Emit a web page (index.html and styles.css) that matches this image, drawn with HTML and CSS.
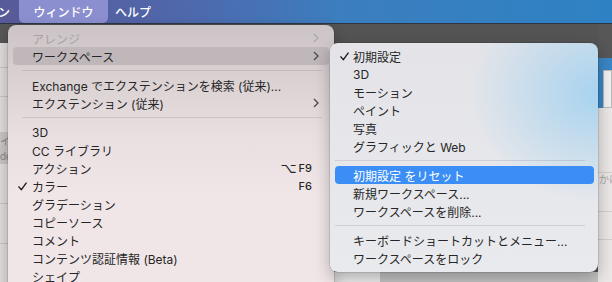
FILE: index.html
```html
<!DOCTYPE html>
<html lang="ja">
<head>
    <meta charset="UTF-8">
    <meta name="viewport" content="width=device-width, initial-scale=1.0">
    <title>ウィンドウ メニュー</title>
    <link rel="stylesheet" href="styles.css">
</head>
<body>

<div class="screen">
    <!-- メニューバー -->
    <div class="menubar">
        <span class="mb-item cut">ン</span>
        <span class="mb-item active">ウィンドウ</span>
        <span class="mb-item">ヘルプ</span>
    </div>

    <!-- 背景のアプリ画面 -->
    <div class="desk">
        <div class="side-left">
            <div class="dark" style="height:19px"></div>
            <div class="row" style="height:25px"></div>
            <div class="row" style="height:29px"></div>
            <div class="row" style="height:36px"></div>
            <div class="row grey" style="height:17px">イ</div>
            <div class="row grey" style="height:14px">do</div>
            <div class="row" style="height:40px"></div>
            <div class="row" style="height:40px"></div>
        </div>
        <div class="mid">
            <div class="mid-bottom"></div>
        </div>
        <div class="side-right">
            <div class="dark" style="height:34px"></div>
            <div class="blue"><div class="thumb"></div></div>
            <div class="panel">
                <div class="prow" style="height:65px"></div>
                <div class="prow hint" style="height:12px">かに</div>
                <div class="prow" style="height:27px"></div>
                <div class="prow" style="height:28px"></div>
            </div>
        </div>
    </div>

    <!-- ウィンドウ メニュー -->
    <div class="menu main-menu">
        <div class="item disabled">
            <span class="check"></span><span class="label">アレンジ</span>
            <svg class="arrow" viewBox="0 0 6 10" width="6" height="10"><path d="M1 1l4 4-4 4" /></svg>
        </div>
        <div class="item hover">
            <span class="check"></span><span class="label">ワークスペース</span>
            <svg class="arrow" viewBox="0 0 6 10" width="6" height="10"><path d="M1 1l4 4-4 4" /></svg>
        </div>
        <div class="sep"></div>
        <div class="item">
            <span class="check"></span><span class="label">Exchange でエクステンションを検索 (従来)...</span>
        </div>
        <div class="item">
            <span class="check"></span><span class="label">エクステンション (従来)</span>
            <svg class="arrow" viewBox="0 0 6 10" width="6" height="10"><path d="M1 1l4 4-4 4" /></svg>
        </div>
        <div class="sep"></div>
        <div class="item"><span class="check"></span><span class="label">3D</span></div>
        <div class="item"><span class="check"></span><span class="label">CC ライブラリ</span></div>
        <div class="item">
            <span class="check"></span><span class="label">アクション</span>
            <span class="shortcut"><span class="opt">⌥</span>F9</span>
        </div>
        <div class="item">
            <span class="check"><svg class="tick" viewBox="0 0 10 10" width="9" height="9"><path d="M1 5.4l2.8 3.1L9 1.2" /></svg></span>
            <span class="label">カラー</span>
            <span class="shortcut">F6</span>
        </div>
        <div class="item"><span class="check"></span><span class="label">グラデーション</span></div>
        <div class="item"><span class="check"></span><span class="label">コピーソース</span></div>
        <div class="item"><span class="check"></span><span class="label">コメント</span></div>
        <div class="item"><span class="check"></span><span class="label">コンテンツ認証情報 (Beta)</span></div>
        <div class="item"><span class="check"></span><span class="label">シェイプ</span></div>
    </div>

    <!-- ワークスペース サブメニュー -->
    <div class="menu sub-menu">
        <div class="item">
            <span class="check"><svg class="tick" viewBox="0 0 10 10" width="9" height="9"><path d="M1 5.4l2.8 3.1L9 1.2" /></svg></span>
            <span class="label">初期設定</span>
        </div>
        <div class="item"><span class="check"></span><span class="label">3D</span></div>
        <div class="item"><span class="check"></span><span class="label">モーション</span></div>
        <div class="item"><span class="check"></span><span class="label">ペイント</span></div>
        <div class="item"><span class="check"></span><span class="label">写真</span></div>
        <div class="item"><span class="check"></span><span class="label">グラフィックと Web</span></div>
        <div class="sep"></div>
        <div class="item selected"><span class="check"></span><span class="label">初期設定 をリセット</span></div>
        <div class="item"><span class="check"></span><span class="label">新規ワークスペース...</span></div>
        <div class="item"><span class="check"></span><span class="label">ワークスペースを削除...</span></div>
        <div class="sep"></div>
        <div class="item"><span class="check"></span><span class="label">キーボードショートカットとメニュー...</span></div>
        <div class="item"><span class="check"></span><span class="label">ワークスペースをロック</span></div>
    </div>
</div>

</body>
</html>
```

FILE: styles.css
```css
/* 画面全体 */
* {
    box-sizing: border-box;
}
body {
    margin: 0;
    font-family: "Inter", "Noto Sans CJK JP", sans-serif;
}
.screen {
    position: relative;
    width: 612px;
    height: 282px;
    overflow: hidden;
    background: #545454;
    display: flex;
    flex-direction: column;
}

/* メニューバー */
.menubar {
    height: 24px;
    flex-shrink: 0;
    display: flex;
    background: linear-gradient(90deg, #595a98 0%, #4f68ac 30%, #3c7ebf 55%, #2e82c3 100%);
    border-bottom: 1px solid #2c3648;
    color: #fff;
    font-size: 12px;
    font-weight: 500;
}
.mb-item {
    display: flex;
    align-items: center;
    padding-bottom: 1px;
}
.mb-item.cut {
    margin-left: -2px;
    margin-right: 9px;
}
.mb-item.active {
    width: 89px;
    justify-content: center;
    background: #8b8fd0;
    border-radius: 0 0 5px 5px;
    margin-right: 7px;
}

/* 背景のアプリ */
.desk {
    flex: 1;
    display: flex;
}
.side-left {
    width: 8px;
    display: flex;
    flex-direction: column;
    background: #e2dede;
}
.dark {
    background: #575757;
}
.row {
    border-bottom: 1px solid #c9c5c5;
    font-size: 10px;
    color: #8a8a8a;
    overflow: hidden;
    white-space: nowrap;
}
.row.grey {
    background: #cbc7c7;
}
.mid {
    flex: 1;
    display: flex;
    flex-direction: column;
    justify-content: flex-end;
}
.mid-bottom {
    height: 10px;
    background: linear-gradient(90deg, #efefef 0 372px, #c4c4c4 372px);
}
.side-right {
    width: 14px;
    display: flex;
    flex-direction: column;
}
.blue {
    height: 50px;
    background: #3a86c6;
    padding: 12px 0 0 5px;
}
.thumb {
    height: 38px;
    background: #f1f1f1;
    border: 1px solid #b8b8b8;
}
.panel {
    flex: 1;
    background: #ebe7e7;
}
.prow {
    border-bottom: 1px solid #d3cfcf;
}
.prow.hint {
    border-bottom: none;
    font-size: 10px;
    line-height: 12px;
    color: #a8a4a4;
    white-space: nowrap;
    padding-left: 1px;
}

/* メニュー */
.menu {
    position: absolute;
    border-radius: 8px;
    font-size: 12px;
    color: #262626;
    box-shadow: 0 0 0 0.5px rgba(0, 0, 0, 0.2), 0 6px 16px rgba(0, 0, 0, 0.28);
}
.main-menu {
    left: 8px;
    top: 25px;
    width: 326px;
    height: 280px;
    padding: 4px 5px;
    background: linear-gradient(180deg, #cbc3c5 0, #d9d0d2 50px, #e9dfe1 110px, #f0e6e8 170px);
}
.sub-menu {
    left: 330px;
    top: 43px;
    width: 268px;
    padding: 4px 4px 5px 5px;
    background:
        radial-gradient(ellipse 130px 110px at 100% 22%, #a8d3ef 0, rgba(168, 211, 239, 0) 100%),
        linear-gradient(180deg, #e4e4e8, #e9eaee);
}
.item {
    height: 18px;
    display: flex;
    align-items: center;
    padding-left: 5px;
    border-radius: 4px;
    white-space: nowrap;
}
.check {
    width: 14px;
    display: flex;
    align-items: center;
}
.sub-menu .check {
    width: 13px;
}
.tick path {
    fill: none;
    stroke: #222;
    stroke-width: 1.6;
    stroke-linecap: round;
    stroke-linejoin: round;
}
.label {
    flex: 1;
}
.arrow {
    margin-right: 10px;
}
.arrow path {
    fill: none;
    stroke: #4a4a4a;
    stroke-width: 1.3;
}
.shortcut {
    display: flex;
    align-items: center;
    margin-right: 17px;
    font-size: 11px;
    font-weight: 500;
}
.opt {
    font-family: "DejaVu Sans", sans-serif;
    font-size: 14px;
    margin-right: 2px;
}
.item.disabled {
    color: #a9a2a4;
}
.item.disabled .arrow path {
    stroke: #aea8aa;
}
.item.hover {
    background: #bfb7ba;
}
.item.selected {
    background: #3b8ef5;
    color: #fff;
}
.sep {
    height: 11px;
    display: flex;
    align-items: center;
}
.sep::after {
    content: '';
    flex: 1;
    height: 1px;
    margin: 0 7px 0 9px;
    background: rgba(0, 0, 0, 0.1);
}
.sub-menu .sep::after {
    margin: 0 9px 0 0;
}
```
